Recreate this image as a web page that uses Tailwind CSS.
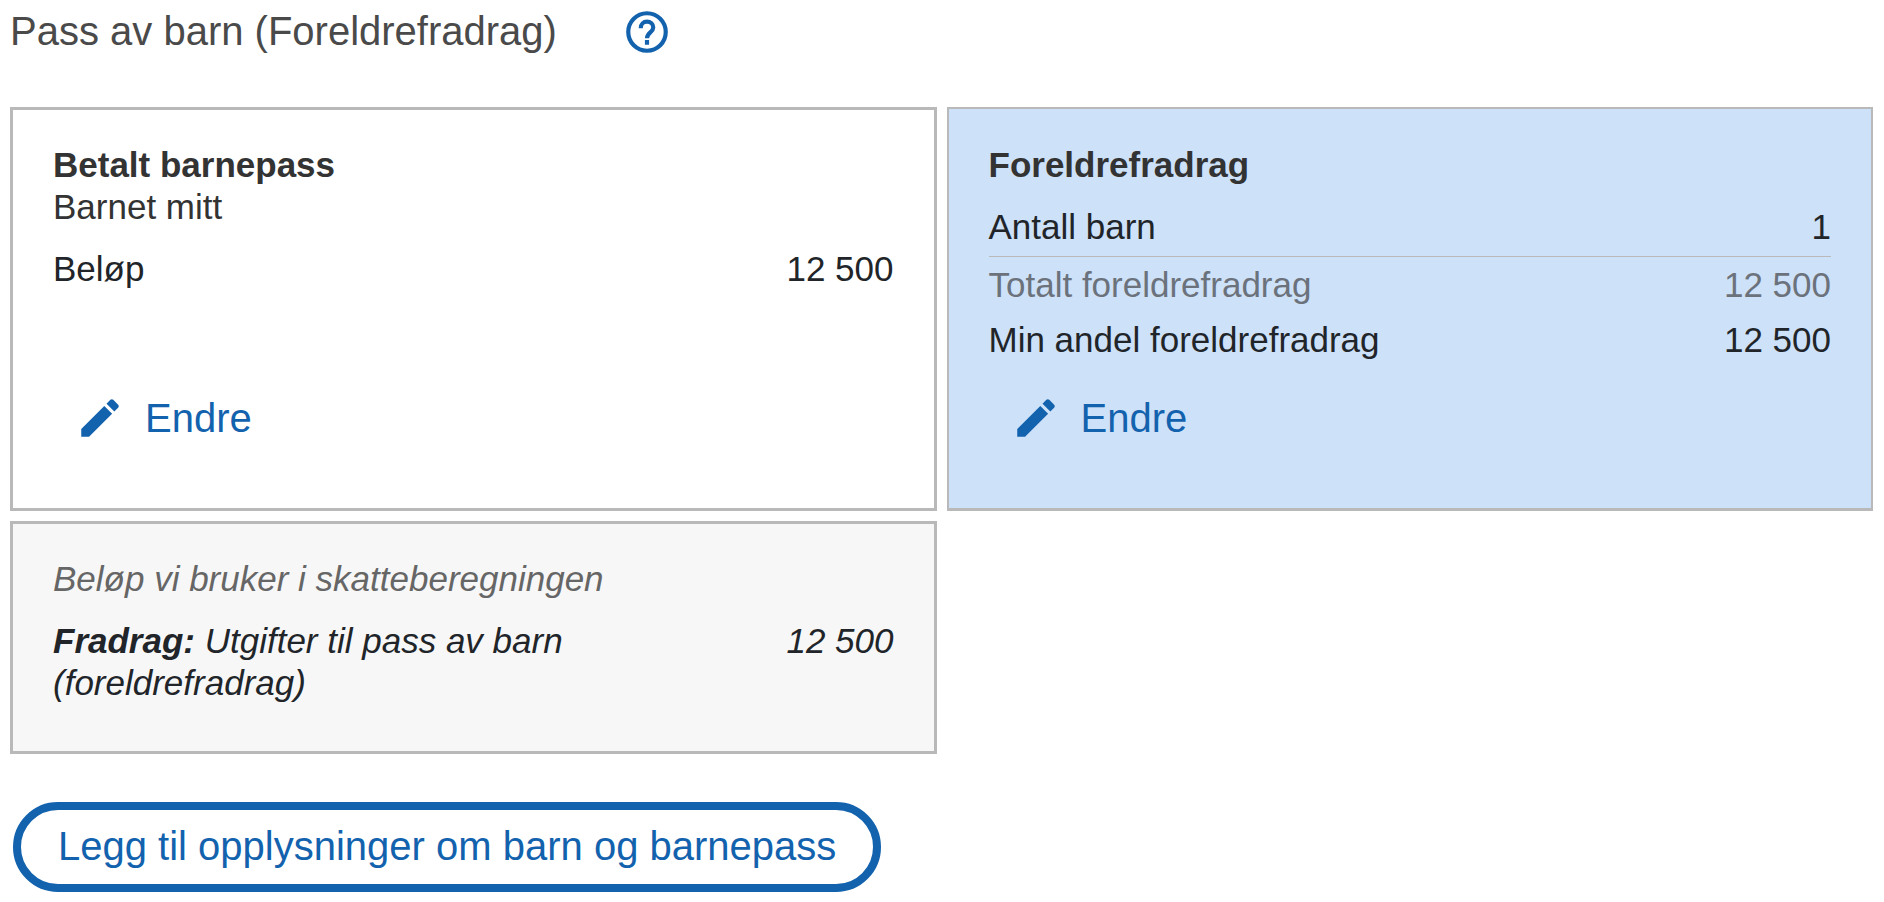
<!DOCTYPE html>
<html lang="nb">
<head>
  <meta charset="UTF-8" />
  <meta name="viewport" content="width=device-width, initial-scale=1.0"/>
  <title>Pass av barn (Foreldrefradrag)</title>
  <script src="https://cdn.jsdelivr.net/npm/@tailwindcss/browser@4"></script>
</head>
<body class="bg-white font-['Liberation_Sans',Arial,sans-serif] text-[35px] leading-[42px] text-[#212529]">

  <main class="pl-[10px] pr-[11px] pt-[7px] pb-[10px]">

    <header class="flex items-start gap-[65px] mb-[50px]">
      <h1 class="text-[40px] leading-[48px] text-[#4a4a4a]">Pass av barn (Foreldrefradrag)</h1>
      <button type="button" aria-label="Hjelp" class="text-[#1362ae] cursor-pointer">
        <svg class="block size-[50px]" viewBox="0 0 24 24" fill="none" stroke="currentColor" stroke-width="2" aria-hidden="true">
          <circle cx="12" cy="12" r="9"/>
          <path d="M9 10.200c0-1.900 1.300-3.150 3-3.150s3 1.200 3 2.750c0 2.300-3 2.500-3 5.200M12 15.900v2.200"/>
        </svg>
      </button>
    </header>

    <div class="grid grid-cols-2 gap-[10px]">

      <section class="flex flex-col border-3 border-[#b9b9b9] px-[40px] pt-[34px] pb-[65px]">
        <h2 class="font-bold text-[#333]">Betalt barnepass</h2>
        <p class="text-[#333]">Barnet mitt</p>
        <dl class="mt-5">
          <div class="flex justify-between">
            <dt>Beløp</dt>
            <dd>12 500</dd>
          </div>
        </dl>
        <button type="button" class="mt-auto ml-[22px] flex items-center gap-5 self-start text-[40px] leading-[50px] text-[#1362ae] cursor-pointer">
          <svg class="size-[50px]" viewBox="0 0 24 24" fill="currentColor" aria-hidden="true">
            <path d="M3 17.250V21h3.750L17.810 9.940l-3.750-3.750L3 17.250zM20.710 7.040c.39-.39.39-1.020 0-1.410l-2.340-2.340c-.39-.39-1.020-.39-1.410 0l-1.830 1.830 3.750 3.750 1.830-1.830z"/>
          </svg>
          Endre
        </button>
      </section>

      <section class="flex flex-col border-2 border-b-3 border-[#b9b9b9] bg-[#cde1f9] px-[40px] pt-[35px] pb-[65px]">
        <h2 class="font-bold text-[#333]">Foreldrefradrag</h2>
        <dl class="mt-5">
          <div class="flex justify-between border-b border-[#b9b9b9] pb-2">
            <dt>Antall barn</dt>
            <dd>1</dd>
          </div>
          <div class="mt-[7px] flex justify-between text-[#6b727b]">
            <dt>Totalt foreldrefradrag</dt>
            <dd>12 500</dd>
          </div>
          <div class="mt-[13px] flex justify-between">
            <dt>Min andel foreldrefradrag</dt>
            <dd>12 500</dd>
          </div>
        </dl>
        <button type="button" class="mt-8 ml-[22px] flex items-center gap-5 self-start text-[40px] leading-[50px] text-[#1362ae] cursor-pointer">
          <svg class="size-[50px]" viewBox="0 0 24 24" fill="currentColor" aria-hidden="true">
            <path d="M3 17.250V21h3.750L17.810 9.940l-3.750-3.750L3 17.250zM20.710 7.040c.39-.39.39-1.020 0-1.410l-2.340-2.340c-.39-.39-1.020-.39-1.410 0l-1.830 1.830 3.750 3.750 1.830-1.830z"/>
          </svg>
          Endre
        </button>
      </section>

      <section class="border-3 border-[#b9b9b9] bg-[#f7f7f7] px-[40px] pt-[34px] pb-[47px] italic">
        <h2 class="text-[#666]">Beløp vi bruker i skatteberegningen</h2>
        <dl class="mt-5">
          <div class="flex justify-between">
            <dt class="w-2/3"><strong>Fradrag:</strong> Utgifter til pass av barn (foreldrefradrag)</dt>
            <dd>12 500</dd>
          </div>
        </dl>
      </section>

    </div>

    <button type="button" class="mt-12 ml-[3px] rounded-full border-8 border-[#1362ae] bg-white px-[37px] pt-[11px] pb-[13px] text-[40px] leading-[50px] text-[#1362ae] cursor-pointer">Legg til opplysninger om barn og barnepass</button>

  </main>

</body>
</html>
